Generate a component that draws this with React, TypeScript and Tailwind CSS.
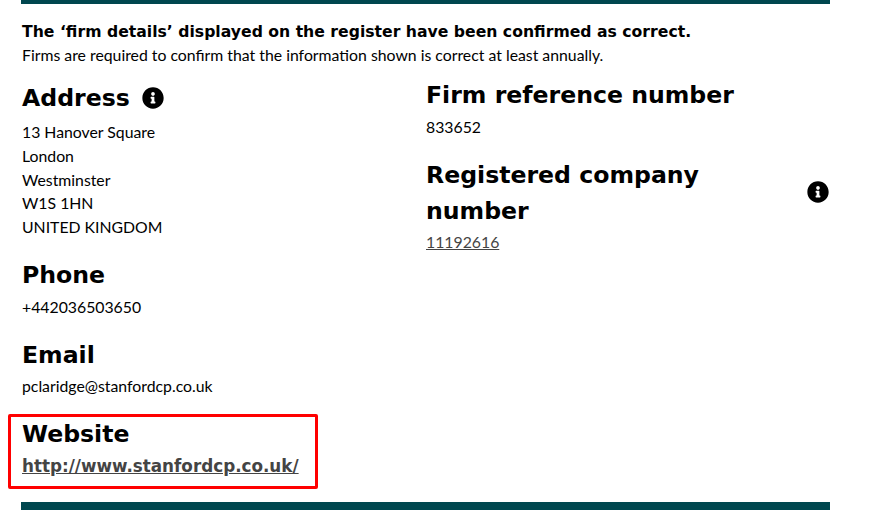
function InfoIcon({ className }: { className?: string }) {
  return (
    <svg viewBox="0 0 512 512" className={className} fill="currentColor">
      <path d="M256 8C119 8 8 119 8 256s111 248 248 248 248-111 248-248S393 8 256 8zm0 110c23.2 0 42 18.8 42 42s-18.8 42-42 42-42-18.8-42-42 18.8-42 42-42zm56 254c0 6.6-5.4 12-12 12h-88c-6.6 0-12-5.400-12-12v-24c0-6.600 5.400-12 12-12h12v-64h-12c-6.600 0-12-5.400-12-12v-24c0-6.600 5.400-12 12-12h64c6.600 0 12 5.400 12 12v100h12c6.600 0 12 5.400 12 12v24z" />
    </svg>
  );
}

const heading = "font-['DejaVu_Sans',sans-serif] font-bold text-[23.6px] leading-[36px] text-black";

export default function App() {
  return (
    <div className="w-[896px] h-[510px] bg-white overflow-hidden font-['Lato',sans-serif] text-[15.8px] text-black">
      <div className="ml-[21px] w-[809px] h-[510px] flex flex-col">
        <div className="h-1 bg-[#00474f]" />

        <div className="pl-px pt-[17px]">
          <p className="font-['DejaVu_Sans',sans-serif] font-bold text-[15.67px] leading-[22px]">
            The ‘firm details’ displayed on the register have been confirmed as correct.
          </p>
          <p className="leading-[24px]">
            Firms are required to confirm that the information shown is correct at least annually.
          </p>
        </div>

        <div className="flex flex-1 pl-px">
          <div className="w-[404px] pt-[13px]">
            <h2 className={`${heading} flex items-center gap-3`}>
              Address <InfoIcon className="w-[22px] h-[22px]" />
            </h2>
            <div className="mt-[4px] leading-[23.8px]">
              <div>13 Hanover Square</div>
              <div>London</div>
              <div>Westminster</div>
              <div>W1S 1HN</div>
              <div>UNITED KINGDOM</div>
            </div>

            <h2 className={`${heading} mt-[18px]`}>Phone</h2>
            <div className="mt-[2px] leading-[24px]">+442036503650</div>

            <h2 className={`${heading} mt-[18px]`}>Email</h2>
            <div className="mt-[1px] leading-[24px]">pclaridge@stanfordcp.co.uk</div>

            <div className="relative mt-[16px]">
              <div className="absolute -left-[14px] top-0 w-[310px] h-[75px] border-[3px] border-[#ff0000] rounded-[2px]" />
              <h2 className={`${heading} pt-[2px]`}>Website</h2>
              <a href="#" className="block mt-[2px] font-['DejaVu_Sans',sans-serif] font-bold text-[16.8px] leading-[24px] text-[#444444] underline">
                http://www.stanfordcp.co.uk/
              </a>
            </div>
          </div>

          <div className="flex-1 pt-[10px]">
            <h2 className={heading}>Firm reference number</h2>
            <div className="mt-[2px] leading-[24px]">833652</div>
            <div className="flex items-center mt-[18px]">
              <h2 className={`${heading} flex-1 pr-[100px]`}>Registered company number</h2>
              <InfoIcon className="w-[22px] h-[22px] mr-px mb-[2px]" />
            </div>
            <a href="#" className="block mt-px leading-[24px] text-[#444444] underline">11192616</a>
          </div>
        </div>

        <div className="h-2 bg-[#00474f]" />
      </div>
    </div>
  );
}
